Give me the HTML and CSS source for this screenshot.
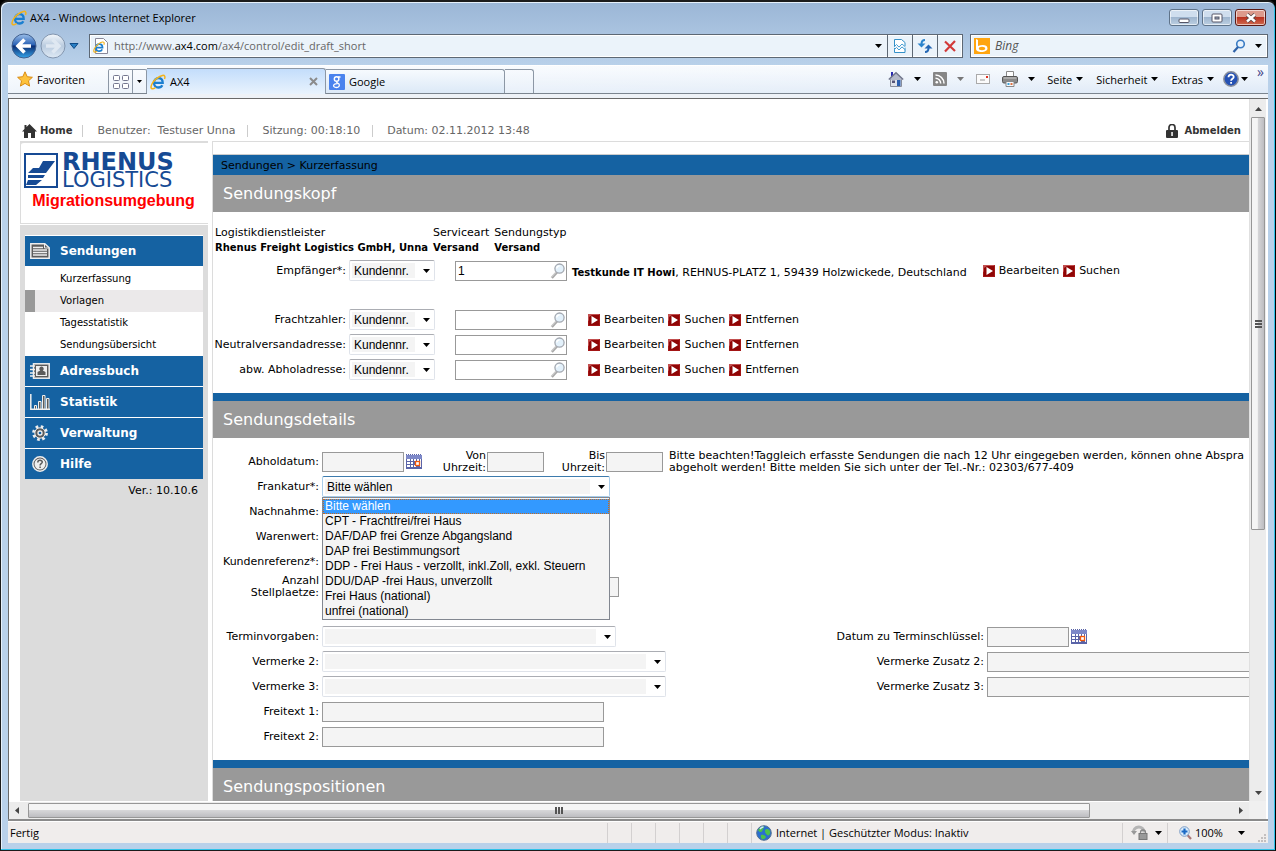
FILE: index.html
```html
<!DOCTYPE html>
<html lang="de">
<head>
    <meta charset="utf-8" />
    <title>AX4 - Windows Internet Explorer</title>
    <link rel="stylesheet" href="styles.css">
</head>
<body>
    <!-- shared icons -->
    <svg class="defs" width="0" height="0">
        <defs>
            <linearGradient id="gblue" x1="0" y1="0" x2="0" y2="1">
                <stop offset="0" stop-color="#9dc0ea" />
                <stop offset=".45" stop-color="#2a62b5" />
                <stop offset=".5" stop-color="#0b2c72" />
                <stop offset="1" stop-color="#35a5ea" />
            </linearGradient>
            <linearGradient id="gpale" x1="0" y1="0" x2="0" y2="1">
                <stop offset="0" stop-color="#f4f8fc" />
                <stop offset=".5" stop-color="#b9cbdf" />
                <stop offset="1" stop-color="#dfeaf5" />
            </linearGradient>
            <symbol id="ie" viewBox="0 0 16 16">
                <path d="M3.500 8.800h9.200c0-3-1.700-4.600-4.300-4.600S4 6.200 4 8.900s1.800 4.600 4.400 4.600c1.900 0 3.200-.8 3.900-2.300" fill="none" stroke="#1b7fd0" stroke-width="2.300" />
                <path d="M4 7.500c.4-2.200 2-3.500 4.300-3.500" fill="none" stroke="#6fc3f5" stroke-width="1" />
                <path d="M14.500 5C15.500 2.400 14.600 1 12.500 1.400 9 2 4 6 2 10c-1.700 3.300-1.100 5.200 1 4.800.9-.2 1.800-.7 2.600-1.300" fill="none" stroke="#f3b31b" stroke-width="1.500" />
            </symbol>
            <symbol id="play" viewBox="0 0 12 12">
                <rect width="12" height="12" fill="#a31515" />
                <path d="M0 0h12L0 7z" fill="#c25050" />
                <path d="M1 3l3-2h7v10H1z" fill="#8f0505" />
                <path d="M3.500 2l6.500 4-6.500 4z" fill="#fff" />
            </symbol>
            <symbol id="lens" viewBox="0 0 16 16">
                <path d="M6.800 9.300L1.800 14.800" stroke="#a9a9a9" stroke-width="2.600" />
                <path d="M6.300 9L1.300 14.300" stroke="#dedede" stroke-width="1" />
                <circle cx="9.500" cy="5.600" r="4.600" fill="#e3f1fb" stroke="#a3a8b0" stroke-width="1.300" />
                <path d="M6.700 5.500a3 3 0 0 1 3-2.700" fill="none" stroke="#fff" stroke-width="1.300" />
            </symbol>
            <symbol id="cal" viewBox="0 0 16 16">
                <path d="M0 0h16v15H0z" fill="#5a64a8" />
                <path d="M0 1h16v4H0z" fill="#7d88c8" />
                <path d="M1 .5h15" stroke="#fff" stroke-width="1" stroke-dasharray="1 1" />
                <path d="M1 5h3v2H1zM5 5h2v2H5zM8 5h2v2H8zM11 5h2v2h-2zM1 8h3v2H1zM5 8h2v2H5zM1 11h3v2H1zM5 11h2v2H5zM8 11h2v2H8zM14 5h1v8h-1z" fill="#fff" />
                <rect x="9.500" y="7.500" width="4" height="4" fill="#fff" stroke="#f2590d" stroke-width="1.300" />
            </symbol>
            <symbol id="arrow" viewBox="0 0 7 4"><path d="M0 0h7L3.500 4z" fill="currentColor" /></symbol>
        </defs>
    </svg>

    <div class="window">
        <header class="titlebar">
            <svg class="i16"><use href="#ie" /></svg>
            <span>AX4 - Windows Internet Explorer</span>
            <div class="winbuttons">
                <button type="button" aria-label="Minimieren"><svg width="12" height="12" viewBox="0 0 12 12"><rect x="1" y="7" width="10" height="3.500" rx="1" fill="#fff" stroke="#556" /></svg></button>
                <button type="button" aria-label="Maximieren"><svg width="12" height="12" viewBox="0 0 12 12"><rect x="1" y="2" width="10" height="8" rx="1" fill="#fff" stroke="#556" /><rect x="4" y="5" width="4" height="2" fill="#9ab" stroke="#556" /></svg></button>
                <button type="button" class="close" aria-label="Schließen"><svg width="14" height="12" viewBox="0 0 14 12"><path d="M3 2.500l8 7M11 2.500l-8 7" stroke="#544" stroke-width="4" /><path d="M3 2.500l8 7M11 2.500l-8 7" stroke="#fff" stroke-width="2.400" /></svg></button>
            </div>
        </header>

        <div class="navbar">
            <div class="history">
                <button type="button" aria-label="Zurück"><svg width="26" height="26" viewBox="0 0 26 26"><circle cx="13" cy="13" r="12" fill="url(#gblue)" stroke="#41608f" /><path d="M13.500 6.500L7 13l6.500 6.500M8 13h12" fill="none" stroke="#fff" stroke-width="3.600" /></svg></button>
                <button type="button" aria-label="Vorwärts"><svg width="26" height="26" viewBox="0 0 26 26"><circle cx="13" cy="13" r="12" fill="url(#gpale)" stroke="#8295ae" /><path d="M12.500 6.500L19 13l-6.500 6.500M18 13H6" fill="none" stroke="#dfe8f2" stroke-width="3.400" /></svg></button>
                <svg class="histarrow" width="10" height="6" viewBox="0 0 10 6"><path d="M1 .5h8L5 5.500z" fill="#2a7fc4" stroke="#0e4a86" /></svg>
            </div>
            <div class="address">
                <svg width="16" height="16" viewBox="0 0 16 16"><path d="M2.500.5h8l4 4v11h-12z" fill="#fff" stroke="#889" /><use href="#ie" x="0" y="3" width="12" height="12" /></svg>
                <label class="url" for="url">http://www.<b>ax4.com</b>/ax4/control/edit_draft_short</label>
                <input id="url" type="text" />
                <svg class="arr"><use href="#arrow" /></svg>
                <button type="button" aria-label="Kompatibilitätsansicht"><svg width="14" height="16" viewBox="0 0 14 16"><path d="M1.500 8V1.500h7l3.500 3V8M1.500 10v4.500H12V10" fill="#fff" stroke="#3591c8" /><path d="M1 9l2.500-2.500L6 9l3-3 3.500 3M1 12l2.500-2.500L6 12l3-3 3.500 3" fill="none" stroke="#4aa0d4" /></svg></button>
                <button type="button" aria-label="Aktualisieren"><svg width="16" height="16" viewBox="0 0 16 16"><path d="M8 2C5.500 2 4.500 3.500 4.500 6" fill="none" stroke="#2b84cc" stroke-width="2" /><path d="M.5 5.500h8L4.500 9.500z" fill="#2b84cc" /><path d="M8 14c2.500 0 3.500-1.500 3.500-4" fill="none" stroke="#2467b4" stroke-width="2" /><path d="M7.500 10.500h8L11.500 6.500z" fill="#2467b4" /></svg></button>
                <button type="button" aria-label="Abbrechen"><svg width="14" height="14" viewBox="0 0 14 14"><path d="M2 2.500l10 9.500M12 2L2 12.500" stroke="#d23a3a" stroke-width="2.200" /></svg></button>
            </div>
            <div class="search">
                <svg width="16" height="16" viewBox="0 0 16 16"><rect width="16" height="16" fill="#ffa50f" /><path d="M2 1v10c0 4 11.500 4 11.500-.5C13.500 6.500 8 6.500 4 8V2z" fill="#fff" /><ellipse cx="8" cy="10.500" rx="3.200" ry="1.700" fill="#ffa50f" /></svg>
                <input type="text" placeholder="Bing" aria-label="Bing" />
                <svg width="14" height="14" viewBox="0 0 14 14"><circle cx="8.500" cy="5" r="3.800" fill="#e8f3fd" stroke="#3a7cc4" stroke-width="1.600" /><path d="M6 8l-4.500 5" stroke="#2e62a8" stroke-width="2.200" /></svg>
                <svg class="arr"><use href="#arrow" /></svg>
            </div>
        </div>

        <div class="toolbar">
            <a class="favs" href="#"><svg width="16" height="16" viewBox="0 0 16 16"><path d="M8 .8l2.200 4.900 5.200.6-3.900 3.500 1.100 5.300L8 12.400l-4.600 2.700 1.100-5.300L.6 6.300l5.200-.6z" fill="#fdc23c" stroke="#d98b13" /></svg>Favoriten</a>
            <div class="quick">
                <button type="button" aria-label="Schnellregister"><svg width="16" height="14" viewBox="0 0 16 14"><g fill="#fff" stroke="#74778f"><rect x=".5" y=".5" width="6" height="5" rx="1" /><rect x="9.500" y=".5" width="6" height="5" rx="1" /><rect x=".5" y="8.500" width="6" height="5" rx="1" /><rect x="9.500" y="8.500" width="6" height="5" rx="1" /></g></svg></button>
                <button type="button" aria-label="Registerliste"><svg class="arr small"><use href="#arrow" /></svg></button>
            </div>
            <a class="tab active" href="#"><svg class="i16"><use href="#ie" /></svg><span>AX4</span><svg width="9" height="9" viewBox="0 0 9 9"><path d="M1 1l7 7M8 1L1 8" stroke="#8b8b8b" stroke-width="2" /></svg></a>
            <a class="tab" href="#"><svg class="i16" viewBox="0 0 16 16"><rect width="16" height="16" rx="1" fill="#4a83ee" /><circle cx="7.600" cy="5" r="2.300" fill="none" stroke="#fff" stroke-width="1.400" /><path d="M9 3h2.500M8 7.300c-1.500 1 .8 1.500 1.800 2.500 1.500 1.700-.2 3.700-2.300 3.700-2.300 0-3.700-1.400-2.500-2.900.7-.8 2-1 3.500-1" fill="none" stroke="#fff" stroke-width="1.300" /></svg><span>Google</span></a>
            <button type="button" class="newtab" aria-label="Neue Registerkarte"></button>
            <nav class="commands">
                <a href="#" aria-label="Startseite"><svg width="16" height="16" viewBox="0 0 16 16"><path d="M3 1h2v5H3z" fill="#2a2ab0" /><path d="M2.500 8h11v7.500h-11z" fill="#dfe2ea" stroke="#888d9a" /><path d="M.8 8.500L8 1.800l7.200 6.700" fill="#b4b9c9" stroke="#70758a" stroke-width="1.400" /><path d="M9 9h3.500v6H9z" fill="#2c5fae" /><path d="M4 9.500h3v2.500H4z" fill="#557" /></svg></a>
                <svg class="arr"><use href="#arrow" /></svg>
                <a class="rss" href="#" aria-label="Feeds"><svg width="14" height="14" viewBox="0 0 14 14"><rect width="14" height="14" rx="1" fill="#868686" /><circle cx="3.800" cy="10.200" r="1.300" fill="#fff" /><path d="M2.500 6.300a5.200 5.200 0 0 1 5.200 5.200M2.500 3a8.500 8.500 0 0 1 8.500 8.500" fill="none" stroke="#fff" stroke-width="1.500" /></svg></a>
                <svg class="arr pale"><use href="#arrow" /></svg>
                <a class="mail" href="#" aria-label="E-Mail lesen"><svg width="14" height="10" viewBox="0 0 14 10"><rect x=".5" y=".5" width="13" height="9" fill="#fbfbfb" stroke="#aaa" /><path d="M10 2h2v2h-2z" fill="#e03020" /><path d="M4 6h5" stroke="#999" /></svg></a>
                <a class="print" href="#" aria-label="Drucken"><svg width="16" height="16" viewBox="0 0 16 16"><path d="M4.500.5h7V6h-7z" fill="#fff" stroke="#888" /><rect x=".5" y="5.500" width="15" height="6.500" rx="1.500" fill="#8a8a8a" stroke="#555" /><path d="M1.500 7h13" stroke="#ccc" /><path d="M4 10.500h8v5H4z" fill="#f6f9fd" stroke="#888" /><path d="M5.500 13h2" stroke="#3aa0d8" stroke-width="2" /><path d="M8.500 13h2" stroke="#e07040" stroke-width="2" /></svg></a>
                <svg class="arr"><use href="#arrow" /></svg>
                <a class="menu m1" href="#">Seite<svg class="arr"><use href="#arrow" /></svg></a>
                <a class="menu" href="#">Sicherheit<svg class="arr"><use href="#arrow" /></svg></a>
                <a class="menu" href="#">Extras<svg class="arr"><use href="#arrow" /></svg></a>
                <a class="menu help" href="#" aria-label="Hilfe"><svg width="16" height="16" viewBox="0 0 16 16"><circle cx="8" cy="8" r="7.200" fill="#2451b4" stroke="#8a8f9c" stroke-width="1.500" /><path d="M5.500 6.200c0-3.300 5.200-3.200 5.200-.3 0 1.800-2.600 1.800-2.600 3.800M8.100 11v1.800" fill="none" stroke="#fff" stroke-width="1.800" /></svg><svg class="arr"><use href="#arrow" /></svg></a>
                <a class="more" href="#">»</a>
            </nav>
        </div>

        <div class="viewport">
            <div class="page">
                <div class="topline">
                    <a class="home" href="#"><svg width="15" height="14" viewBox="0 0 15 14"><path d="M7.500 0L15 7.500h-2V14H9V9H6v5H2V7.500H0L2.500 5V1h2v2z" fill="#333" /></svg>Home</a>
                    <span>Benutzer: &nbsp;Testuser Unna</span>
                    <span>Sitzung: 00:18:10</span>
                    <span>Datum: 02.11.2012 13:48</span>
                    <a class="logout" href="#"><svg width="12" height="14" viewBox="0 0 12 14"><path d="M3 6.500V3.500a3 3 0 0 1 6 0v3" fill="none" stroke="#333" stroke-width="1.700" /><rect y="6" width="12" height="8" rx="1" fill="#333" /><path d="M5.300 8h1.500v4H5.300z" fill="#fff" /></svg>Abmelden</a>
                </div>

                <div class="columns">
                    <aside class="sidebar">
                        <div class="brand">
                            <div class="logo">
                                <svg width="34" height="35" viewBox="0 0 34 35"><rect x="1" y="1" width="32" height="33" fill="#fff" stroke="#164a94" stroke-width="2" /><path d="M19 8h12L22 20H4l5-5h6zM4 22h17l-2 3H4zM4 27h14l-6 5H2z" fill="#164a94" /></svg>
                                <div><strong>RHENUS</strong><span>LOGISTICS</span></div>
                            </div>
                            <p>Migrationsumgebung</p>
                        </div>
                        <nav class="sidenav">
                            <a class="main" href="#"><svg width="20" height="16" viewBox="0 0 20 16"><path d="M.8.800h14l4.400 4v10.400H.8z" fill="#5b5b5b" stroke="#eee" stroke-width="1.500" /><path d="M14.500 1v4H19" fill="none" stroke="#eee" /><path d="M3 4.500h10M3 7h14M3 9.500h14M3 12h14" stroke="#eee" stroke-width="1.300" /></svg>Sendungen</a>
                            <ul>
                                <li><a href="#">Kurzerfassung</a></li>
                                <li class="current"><a href="#">Vorlagen</a></li>
                                <li><a href="#">Tagesstatistik</a></li>
                                <li><a href="#">Sendungsübersicht</a></li>
                            </ul>
                            <a class="main" href="#"><svg width="20" height="16" viewBox="0 0 20 16"><rect x="3.500" y=".8" width="15.700" height="14.400" fill="#5b5b5b" stroke="#eee" stroke-width="1.500" /><rect x="6" y="3" width="11" height="10" fill="#eee" /><path d="M11.500 3.500a2.200 2.200 0 0 1 1.300 4l2.700 1.500V12h-8V9l2.700-1.500a2.200 2.200 0 0 1 1.300-4z" fill="#5b5b5b" /><path d="M0 3h5M0 6.500h5M0 10h5M0 13h5" stroke="#eee" stroke-width="1.500" /></svg>Adressbuch</a>
                            <a class="main" href="#"><svg width="20" height="16" viewBox="0 0 20 16"><path d="M.8 0v15.200H20" fill="none" stroke="#eee" stroke-width="1.500" /><path d="M4.500 11.500h2v3.500h-2zM8.500 7.500h2.500V15H8.500zM12.500 1.500h2.500V15h-2.500zM16.500 4.500H19V15h-2.500z" fill="#5b5b5b" stroke="#eee" /></svg>Statistik</a>
                            <a class="main" href="#"><svg width="20" height="16" viewBox="0 0 20 16"><circle cx="10" cy="8" r="6.500" fill="none" stroke="#eee" stroke-width="2.800" stroke-dasharray="2.600 2.500" /><circle cx="10" cy="8" r="5.200" fill="#5b5b5b" stroke="#eee" /><circle cx="10" cy="8" r="2" fill="#1562a2" stroke="#eee" stroke-width="1.300" /></svg>Verwaltung</a>
                            <a class="main" href="#"><svg width="20" height="16" viewBox="0 0 20 16"><circle cx="10" cy="8" r="7.200" fill="#5b5b5b" stroke="#eee" stroke-width="1.500" /><circle cx="10" cy="8" r="5.500" fill="#eee" /><path d="M7.800 6.500c0-3 4.500-2.700 4.500-.4 0 1.600-2.200 1.500-2.200 3.300M10.100 10.500V12" fill="none" stroke="#5b5b5b" stroke-width="1.500" /></svg>Hilfe</a>
                        </nav>
                        <p class="version">Ver.: 10.10.6</p>
                    </aside>

                    <main>
                        <div class="crumbs"><a href="#">Sendungen</a> &gt; <a href="#">Kurzerfassung</a></div>
                        <h2>Sendungskopf</h2>
                        <form class="head-form">
                            <div class="provider">
                                <div>Logistikdienstleister<b>Rhenus Freight Logistics GmbH, Unna</b></div>
                                <div>Serviceart<b>Versand</b></div>
                                <div>Sendungstyp<b>Versand</b></div>
                            </div>
                            <div class="row first">
                                <label for="p1">Empfänger*:</label>
                                <select id="p1"><option>Kundennr.</option></select>
                                <span class="lookup"><input type="text" value="1" aria-label="Empfänger Kundennr." /><svg class="i16"><use href="#lens" /></svg></span>
                                <span class="party"><b>Testkunde IT Howi</b>, REHNUS-PLATZ 1, 59439 Holzwickede, Deutschland</span>
                                <a class="act" href="#"><svg><use href="#play" /></svg>Bearbeiten</a>
                                <a class="act" href="#"><svg><use href="#play" /></svg>Suchen</a>
                            </div>
                            <div class="row">
                                <label for="p2">Frachtzahler:</label>
                                <select id="p2"><option>Kundennr.</option></select>
                                <span class="lookup"><input type="text" aria-label="Frachtzahler Kundennr." /><svg class="i16"><use href="#lens" /></svg></span>
                                <a class="act" href="#"><svg><use href="#play" /></svg>Bearbeiten</a>
                                <a class="act" href="#"><svg><use href="#play" /></svg>Suchen</a>
                                <a class="act" href="#"><svg><use href="#play" /></svg>Entfernen</a>
                            </div>
                            <div class="row">
                                <label for="p3">Neutralversandadresse:</label>
                                <select id="p3"><option>Kundennr.</option></select>
                                <span class="lookup"><input type="text" aria-label="Neutralversandadresse Kundennr." /><svg class="i16"><use href="#lens" /></svg></span>
                                <a class="act" href="#"><svg><use href="#play" /></svg>Bearbeiten</a>
                                <a class="act" href="#"><svg><use href="#play" /></svg>Suchen</a>
                                <a class="act" href="#"><svg><use href="#play" /></svg>Entfernen</a>
                            </div>
                            <div class="row">
                                <label for="p4">abw. Abholadresse:</label>
                                <select id="p4"><option>Kundennr.</option></select>
                                <span class="lookup"><input type="text" aria-label="Abholadresse Kundennr." /><svg class="i16"><use href="#lens" /></svg></span>
                                <a class="act" href="#"><svg><use href="#play" /></svg>Bearbeiten</a>
                                <a class="act" href="#"><svg><use href="#play" /></svg>Suchen</a>
                                <a class="act" href="#"><svg><use href="#play" /></svg>Entfernen</a>
                            </div>
                        </form>

                        <h2 class="ruled">Sendungsdetails</h2>
                        <form class="detail-form">
                            <div class="row">
                                <label for="d1">Abholdatum:</label>
                                <input id="d1" class="date" type="text" />
                                <svg class="i16 cal"><use href="#cal" /></svg>
                                <label class="time" for="d2">Von Uhrzeit:</label>
                                <input id="d2" class="clock" type="text" />
                                <label class="time" for="d3">Bis Uhrzeit:</label>
                                <input id="d3" class="clock" type="text" />
                                <p class="note">Bitte beachten!Taggleich erfasste Sendungen die nach 12 Uhr eingegeben werden, können ohne Abspra<br>abgeholt werden! Bitte melden Sie sich unter der Tel.-Nr.: 02303/677-409</p>
                            </div>
                            <div class="row">
                                <label for="d4">Frankatur*:</label>
                                <div class="combo">
                                    <select id="d4" class="open"><option>Bitte wählen</option></select>
                                    <ul role="listbox" aria-label="Frankatur">
                                        <li role="option" aria-selected="true">Bitte wählen</li>
                                        <li role="option">CPT - Frachtfrei/frei Haus</li>
                                        <li role="option">DAF/DAP frei Grenze Abgangsland</li>
                                        <li role="option">DAP frei Bestimmungsort</li>
                                        <li role="option">DDP - Frei Haus - verzollt, inkl.Zoll, exkl. Steuern</li>
                                        <li role="option">DDU/DAP -frei Haus, unverzollt</li>
                                        <li role="option">Frei Haus (national)</li>
                                        <li role="option">unfrei (national)</li>
                                    </ul>
                                </div>
                            </div>
                            <div class="row"><label for="d5">Nachnahme:</label><input id="d5" class="date" type="text" /></div>
                            <div class="row"><label for="d6">Warenwert:</label><input id="d6" class="date" type="text" /></div>
                            <div class="row"><label for="d7">Kundenreferenz*:</label><input id="d7" class="date" type="text" /></div>
                            <div class="row last-top"><label for="d8">Anzahl Stellplaetze:</label><input id="d8" class="slots" type="text" /></div>
                            <div class="row">
                                <label for="d9">Terminvorgaben:</label>
                                <select id="d9" class="w-term"><option></option></select>
                                <div class="extra">
                                    <label for="e1">Datum zu Terminschlüssel:</label>
                                    <div><input id="e1" class="date" type="text" /><svg class="i16 cal"><use href="#cal" /></svg></div>
                                </div>
                            </div>
                            <div class="row">
                                <label for="d10">Vermerke 2:</label>
                                <select id="d10" class="w-note"><option></option></select>
                                <div class="extra">
                                    <label for="e2">Vermerke Zusatz 2:</label>
                                    <div><input id="e2" class="w-long" type="text" /></div>
                                </div>
                            </div>
                            <div class="row">
                                <label for="d11">Vermerke 3:</label>
                                <select id="d11" class="w-note"><option></option></select>
                                <div class="extra">
                                    <label for="e3">Vermerke Zusatz 3:</label>
                                    <div><input id="e3" class="w-long" type="text" /></div>
                                </div>
                            </div>
                            <div class="row"><label for="d12">Freitext 1:</label><input id="d12" class="w-long" type="text" /></div>
                            <div class="row"><label for="d13">Freitext 2:</label><input id="d13" class="w-long" type="text" /></div>
                        </form>

                        <h2 class="ruled">Sendungspositionen</h2>
                    </main>
                </div>
            </div>

            <div class="vscroll">
                <svg width="7" height="4" viewBox="0 0 7 4"><path d="M0 4h7L3.500 0z" fill="#444" /></svg>
                <div class="thumb"><i></i></div>
                <svg width="7" height="4"><use href="#arrow" /></svg>
            </div>
            <div class="hscroll">
                <svg width="4" height="7" viewBox="0 0 4 7"><path d="M4 0v7L0 3.500z" fill="#444" /></svg>
                <div class="thumb"><i></i></div>
                <svg width="4" height="7" viewBox="0 0 4 7"><path d="M0 0v7l4-3.500z" fill="#444" /></svg>
            </div>
            <div class="corner"></div>
        </div>

        <footer class="status">
            <span class="msg">Fertig</span>
            <i></i><i></i><i></i><i></i><i></i><i></i>
            <span class="zone"><svg width="16" height="16" viewBox="0 0 16 16"><circle cx="8" cy="8" r="7.300" fill="#2a6fd0" stroke="#55708f" /><path d="M2 5c2-3 5-4 6-3.500C9 3 6 4 6.500 6 5 8 3 7 2 5zM9 5c2-2 4-1 5 1 .5 3-.5 4-2 4.500C10.500 9 8.500 8 9 5zM5 10c2-.5 4 .5 5 2-1 2-3 2.500-4 2-1-1-1.500-2-1-4z" fill="#4cc24a" /><path d="M4 4c1-1.500 2.500-2 3.500-2" fill="none" stroke="#cfe6fb" stroke-width="1.400" /></svg>Internet | Geschützter Modus: Inaktiv</span>
            <span class="shield"><svg width="17" height="16" viewBox="0 0 17 16"><path d="M2 7C3 3 7 1 10 2.500c2 1 3 3 3 5" fill="none" stroke="#b5b5b5" stroke-width="3" /><path d="M0 6h6l-3 4z" fill="#999" /><path d="M9.500 9V7.500a2.500 2.500 0 0 1 5 0V9" fill="none" stroke="#888" stroke-width="1.300" /><rect x="8" y="8.500" width="8" height="6" fill="#999" stroke="#777" /></svg><svg class="arr"><use href="#arrow" /></svg></span>
            <span class="zoom"><svg width="13" height="14" viewBox="0 0 13 14"><path d="M8 8.500l4 4.500" stroke="#a77" stroke-width="2.200" /><circle cx="5.500" cy="5.500" r="4.800" fill="#d9ecfc" stroke="#7d9cc4" /><path d="M5.500 2.500v6M2.500 5.500h6" stroke="#1c69c4" stroke-width="2.200" /></svg>100%<svg class="arr"><use href="#arrow" /></svg></span>
            <svg class="grip" width="9" height="9" viewBox="0 0 9 9"><path d="M7 1h2v2H7zM4 4h2v2H4zM7 4h2v2H7zM1 7h2v2H1zM4 7h2v2H4zM7 7h2v2H7z" fill="#c3bfbf" /></svg>
        </footer>
    </div>
</body>
</html>
```

FILE: styles.css
```css
* {
    box-sizing: border-box;
}

body {
    margin: 0;
    background: #000;
    font-family: "Open Sans", "Noto Sans", sans-serif;
    font-size: 11px;
    color: #000;
}

a {
    color: inherit;
    text-decoration: none;
}

button {
    padding: 0;
    border: 0;
    background: none;
    font: inherit;
}

svg {
    display: block;
    flex: none;
}

p, h2, ul {
    margin: 0;
    padding: 0;
    list-style: none;
}

.defs {
    position: absolute;
}

.i16 {
    width: 16px;
    height: 16px;
}

.arr {
    width: 7px;
    height: 4px;
}

.pale {
    color: #777;
}

/* window frame */
.window {
    display: flex;
    flex-direction: column;
    height: 100vh;
    border: 1px solid #1b1b1b;
    border-top-width: 2px;
    border-right-color: #000;
    border-radius: 8px 8px 0 0;
    padding: 0 7px 7px 6px;
    background: linear-gradient(#9bb6d6, #b9d1ea 64px);
    box-shadow: inset -1px -1px #2fc2e8, inset 1px 1px #e6f0fa;
}

.titlebar {
    display: flex;
    align-items: center;
    flex: none;
    height: 31px;
    padding: 0 2px 0 4px;
    gap: 3px;
}

.winbuttons {
    display: flex;
    gap: 3px;
    margin-left: auto;
}

    .winbuttons button {
        display: flex;
        align-items: center;
        justify-content: center;
        width: 30px;
        height: 17px;
        border: 1px solid #5f7389;
        border-radius: 3px;
        background: linear-gradient(#cfdeee 45%, #9fb6cf 50%, #bccfe2);
        box-shadow: inset 0 0 0 1px rgba(255, 255, 255, .6);
    }

    .winbuttons .close {
        width: 31px;
        border-color: #5b1a15;
        background: linear-gradient(#dd9a8c 45%, #b93220 50%, #cf6a50);
    }

/* address bar */
.navbar {
    display: flex;
    flex: none;
    align-items: center;
    height: 25px;
    padding-left: 4px;
    margin-bottom: 7px;
}

.history {
    display: flex;
    align-items: center;
    gap: 3px;
    width: 78px;
}

.address, .search {
    display: flex;
    align-items: center;
    height: 24px;
    border: 1px solid #5d6874;
    background: #ebf3fa;
    box-shadow: inset 0 0 0 1px #fff;
}

.address {
    flex: 1;
    padding-left: 3px;
    color: #666;
}

    .address b {
        font-weight: normal;
        color: #000;
    }

    .address .arr {
        color: #000;
        margin-right: 5px;
    }

    .address button {
        display: flex;
        align-items: center;
        justify-content: center;
        width: 25px;
        height: 22px;
        border-left: 1px solid #5d6874;
    }

.url {
    margin-left: 5px;
}

.address input, .search input {
    flex: 1;
    min-width: 0;
    border: 0;
    padding: 0;
    background: none;
    font: inherit;
}

.search {
    width: 298px;
    margin-left: 7px;
    padding: 0 5px 0 3px;
    gap: 5px;
}

    .search input {
        font-size: 12px;
        font-style: italic;
    }

    .search input::placeholder {
        color: #555;
    }

    .search .arr {
        margin-left: 4px;
    }

/* tab row */
.toolbar {
    display: flex;
    flex: none;
    align-items: flex-end;
    height: 29px;
    margin-left: 1px;
    border-top: 1px solid #fff;
    border-bottom: 1px solid #7b858f;
    background: linear-gradient(90deg, rgba(255, 255, 255, .5), rgba(255, 255, 255, 0)), linear-gradient(#f7fafe, #dfeaf7);
}

.favs {
    display: flex;
    align-items: center;
    gap: 4px;
    width: 100px;
    height: 28px;
    padding-left: 9px;
}

.quick {
    display: flex;
    width: 39px;
    height: 24px;
    border: 1px solid #8c97a5;
    border-bottom: 0;
    border-radius: 2px 2px 0 0;
}

    .quick button {
        display: flex;
        align-items: center;
        justify-content: center;
        width: 23px;
    }

    .quick button + button {
        width: 14px;
        border-left: 1px solid #8c97a5;
    }

.small {
    width: 5px;
    height: 3px;
}

.tab {
    display: flex;
    align-items: center;
    gap: 4px;
    width: 179px;
    height: 24px;
    padding: 0 7px 0 3px;
    border: 1px solid #8c97a5;
    border-bottom: 0;
    border-left: 0;
    border-radius: 0 3px 0 0;
    background: linear-gradient(#f6fafe, #dce9f7);
}

.tab.active {
    height: 26px;
    margin-bottom: -1px;
    background: linear-gradient(#c3ddfb, #e9f3fd);
}

    .tab span {
        flex: 1;
    }

.newtab {
    width: 29px;
    height: 24px;
    border: 1px solid #8c97a5;
    border-bottom: 0;
    border-left: 0;
    border-radius: 0 3px 0 0;
}

.commands {
    display: flex;
    align-items: center;
    height: 26px;
    margin: 0 0 auto auto;
    padding-right: 4px;
}

    .commands > .arr {
        margin-left: 10px;
    }

.rss, .mail, .print, .m1 {
    margin-left: 12px;
}

.menu {
    display: flex;
    align-items: center;
    gap: 4px;
}

.menu + .menu {
    margin-left: 13px;
}

.menu.help {
    gap: 2px;
    margin-left: 9px;
}

.more {
    align-self: flex-start;
    margin-left: 9px;
    font-size: 14px;
    line-height: 12px;
    color: #448;
}

/* scrolling area */
.viewport {
    display: grid;
    grid-template-columns: minmax(0, 1fr) 17px;
    grid-template-rows: minmax(0, 1fr) 18px;
    flex: 1;
    min-height: 0;
    margin: 0 0 0 1px;
    border-top: 4px solid #eef2f7;
    border-bottom: 2px solid #8a8a8a;
    background: #fff;
    box-shadow: inset 1px 1px #696969;
    padding: 1px 2px 0 1px;
}

.page {
    display: flex;
    flex-direction: column;
    overflow: hidden;
    padding-left: 11px;
    background: #fff;
    font-family: "DejaVu Sans", Verdana, sans-serif;
    line-height: 12px;
}

    .page b, .page li, .topline a {
        font-size: 10px;
    }

.topline {
    display: flex;
    align-items: center;
    flex: none;
    height: 42px;
    padding: 22px 8px 0 2px;
    color: #666;
}

    .topline span {
        border-left: 1px solid #ccc;
        padding-left: 14px;
        margin-left: 12px;
    }

    .topline .home + span {
        margin-left: 10px;
    }

    .topline a {
        display: flex;
        align-items: center;
        gap: 3px;
        font-weight: bold;
        color: #333;
    }

    .topline .logout {
        margin-left: auto;
        gap: 6px;
    }

.columns {
    display: flex;
    flex: 1;
    min-height: 0;
}

.sidebar {
    display: flex;
    flex-direction: column;
    flex: none;
    width: 188px;
    margin-right: 4px;
    background: #dcdcdc;
}

.brand {
    height: 83px;
    padding: 10px 5px 0 3px;
    border: solid #dcdcdc;
    border-width: 2px 0 1px 1px;
    border-radius: 4px 0 0 0;
    background: #fff;
    box-shadow: 0 1px #fff;
}

    .brand p {
        text-align: center;
        font: bold 16px/20px "Liberation Sans", Arial, sans-serif;
        color: #f00;
    }

.logo {
    display: flex;
    gap: 4px;
    margin-bottom: 2px;
    color: #164a94;
}

    .logo div {
        display: flex;
        flex-direction: column;
    }

    .logo strong {
        font-size: 24px;
        line-height: 18px;
    }

    .logo span {
        font-size: 21px;
        line-height: 18px;
    }

.sidenav {
    margin: 11px 5px 0;
    border-top: 1px solid #fff;
}

    .sidenav .main {
        display: flex;
        align-items: center;
        gap: 10px;
        height: 31px;
        padding-left: 5px;
        border-bottom: 1px solid #fff;
        background: #1562a2;
        color: #fff;
        font-size: 12px;
        font-weight: bold;
    }

    .sidenav .main:first-child, .sidenav .main:last-child {
        border-bottom: 0;
        height: 30px;
    }

    .sidenav ul {
        padding: 2px 0 0;
        background: #fff;
    }

    .sidenav li {
        height: 22px;
        padding-left: 35px;
        line-height: 22px;
    }

    .sidenav .current {
        border-left: 10px solid #999;
        padding-left: 25px;
        background: #ebe9ea;
    }

.version {
    padding: 6px 10px 0 0;
    text-align: right;
}

main {
    flex: 1;
    min-width: 0;
    overflow: hidden;
    border-top: 1px solid #dcdcdc;
    border-left: 1px solid #dcdcdc;
}

.crumbs {
    height: 21px;
    margin-top: 12px;
    padding-left: 8px;
    border-top: 1px solid #ccc;
    background: #1562a2;
    line-height: 21px;
}

h2 {
    height: 37px;
    padding-left: 10px;
    background: #999;
    color: #fff;
    font-size: 16px;
    font-weight: normal;
    line-height: 37px;
}

h2.ruled {
    height: 45px;
    border-top: 8px solid #1562a2;
}

/* form rows */
.row {
    display: flex;
    align-items: center;
    height: 25px;
}

    .row label {
        flex: none;
        text-align: right;
        margin-right: 3px;
    }

.row input[type=text] {
    flex: none;
    height: 20px;
    padding: 0 2px;
    border: 1px solid #999;
    background: #f4f4f4;
    font: 12px "Liberation Sans", Arial, sans-serif;
}

.row select {
    appearance: none;
    flex: none;
    height: 21px;
    padding: 0 20px 0 4px;
    border: 1px solid #dfe3ea;
    border-top-color: #abadb3;
    border-radius: 2px;
    background:
        url("data:image/svg+xml,%3Csvg xmlns='http://www.w3.org/2000/svg' width='7' height='4'%3E%3Cpath d='M0 0h7L3.5 4z'/%3E%3C/svg%3E") right 4px center no-repeat,
        linear-gradient(#f4f4f4, #f4f4f4) 2px 2px / calc(100% - 21px) calc(100% - 4px) no-repeat,
        #fff;
    font: 12px "Liberation Sans", Arial, sans-serif;
    color: #000;
}

.head-form {
    padding: 13px 0 11px;
}

    .head-form .row label {
        width: 133px;
    }

    .head-form select {
        width: 86px;
        margin-right: 20px;
    }

    .head-form .first {
        margin-bottom: 24px;
    }

    .head-form .row input[type=text] {
        width: 112px;
        background: #fff;
    }

.provider {
    display: flex;
    gap: 5px;
    margin-bottom: 3px;
    padding-left: 2px;
    line-height: 15px;
}

    .provider b {
        display: block;
    }

.lookup {
    position: relative;
    margin-right: 21px;
}

    /* lens sits inside the text box */
    .lookup svg {
        position: absolute;
        top: 2px;
        right: 1px;
    }

.first .lookup {
    margin-right: 5px;
}

.party {
    margin-right: 16px;
    padding-top: 4px;
}

.act {
    display: flex;
    align-items: center;
    gap: 4px;
    margin-right: 4px;
    padding-top: 1px;
}

    .act svg {
        width: 12px;
        height: 12px;
    }

.detail-form {
    padding: 11px 0;
}

    .detail-form .row > label {
        width: 106px;
    }

    .detail-form .row > label.time {
        width: 44px;
        margin: 0 1px 0 17px;
    }

.row .date {
    width: 82px;
}

.row .clock {
    width: 57px;
}

.row .slots {
    width: 297px;
}

.row .w-long {
    width: 282px;
}

.row .w-term {
    width: 294px;
}

.row .w-note {
    width: 344px;
}

.cal {
    margin: 0 3px 0 2px;
}

.note {
    margin-left: 6px;
    white-space: nowrap;
}

.last-top {
    margin-bottom: 25px;
}

    .detail-form .last-top label {
        padding-left: 30px;
    }

.combo {
    position: relative;
    z-index: 1;
}

    .combo .open {
        display: block;
        width: 288px;
        border-color: #a9cdea;
        border-top-color: #3d7bad;
    }

    .combo ul {
        position: absolute;
        top: 100%;
        left: 0;
        width: 288px;
        padding-top: 1px;
        border: 1px solid #828790;
        background: #f4f4f4;
        font: 12px/15px "Liberation Sans", Arial, sans-serif;
    }

    .combo ul li {
        padding-left: 2px;
        font-size: 12px;
    }

    .combo li[aria-selected=true] {
        background: #39f;
        outline: 1px dotted #c86a1e;
        outline-offset: -1px;
        color: #fff;
    }

.extra {
    display: flex;
    align-items: center;
    margin-left: auto;
}

    .extra div {
        display: flex;
        align-items: center;
        width: 262px;
    }

/* scroll bars */
.vscroll, .hscroll {
    display: flex;
    align-items: center;
    justify-content: space-between;
    background: #ececec;
    color: #444;
}

.vscroll {
    flex-direction: column;
    padding: 8px 1px 6px;
    border-left: 1px solid #e0e0e0;
}

.hscroll {
    padding: 1px 6px;
    border-top: 1px solid #fff;
}

.thumb {
    display: flex;
    align-items: center;
    justify-content: center;
    border: 1px solid #979797;
    border-radius: 1px;
}

.vscroll .thumb {
    width: 14px;
    height: 413px;
    margin: 6px 0 auto;
    background: linear-gradient(90deg, #f5f5f5 45%, #d6d6d8 50%, #bdbdc1);
}

.hscroll .thumb {
    flex: 0 1 1062px;
    height: 15px;
    margin: 0 auto 0 9px;
    background: linear-gradient(#f5f5f5 45%, #d6d6d8 50%, #bdbdc1);
}

.thumb i {
    width: 8px;
    height: 7px;
    background: repeating-linear-gradient(90deg, #555 0 2px, transparent 2px 3px);
}

.vscroll .thumb i {
    width: 7px;
    height: 8px;
    background: repeating-linear-gradient(#555 0 2px, transparent 2px 3px);
}

.corner {
    background: #f0f0f0;
}

/* status bar */
.status {
    display: flex;
    align-items: center;
    flex: none;
    height: 22px;
    margin-left: 1px;
    border-top: 1px solid #fff;
    background: #f0edec;
}

    .status i {
        width: 24px;
        height: 20px;
        border-left: 1px solid #d3d0d0;
    }

.msg {
    flex: 1;
    padding-left: 2px;
}

.zone, .shield, .zoom {
    display: flex;
    align-items: center;
    height: 20px;
    border-left: 1px solid #d3d0d0;
}

.zone {
    gap: 4px;
    width: 371px;
    padding-left: 4px;
}

.shield {
    gap: 7px;
    width: 45px;
    padding-left: 8px;
}

.zoom {
    gap: 3px;
    width: 85px;
    padding-left: 11px;
}

    .zoom .arr {
        margin-left: auto;
        margin-right: 7px;
    }

.grip {
    align-self: flex-end;
    margin: 0 2px 1px 5px;
}
```
